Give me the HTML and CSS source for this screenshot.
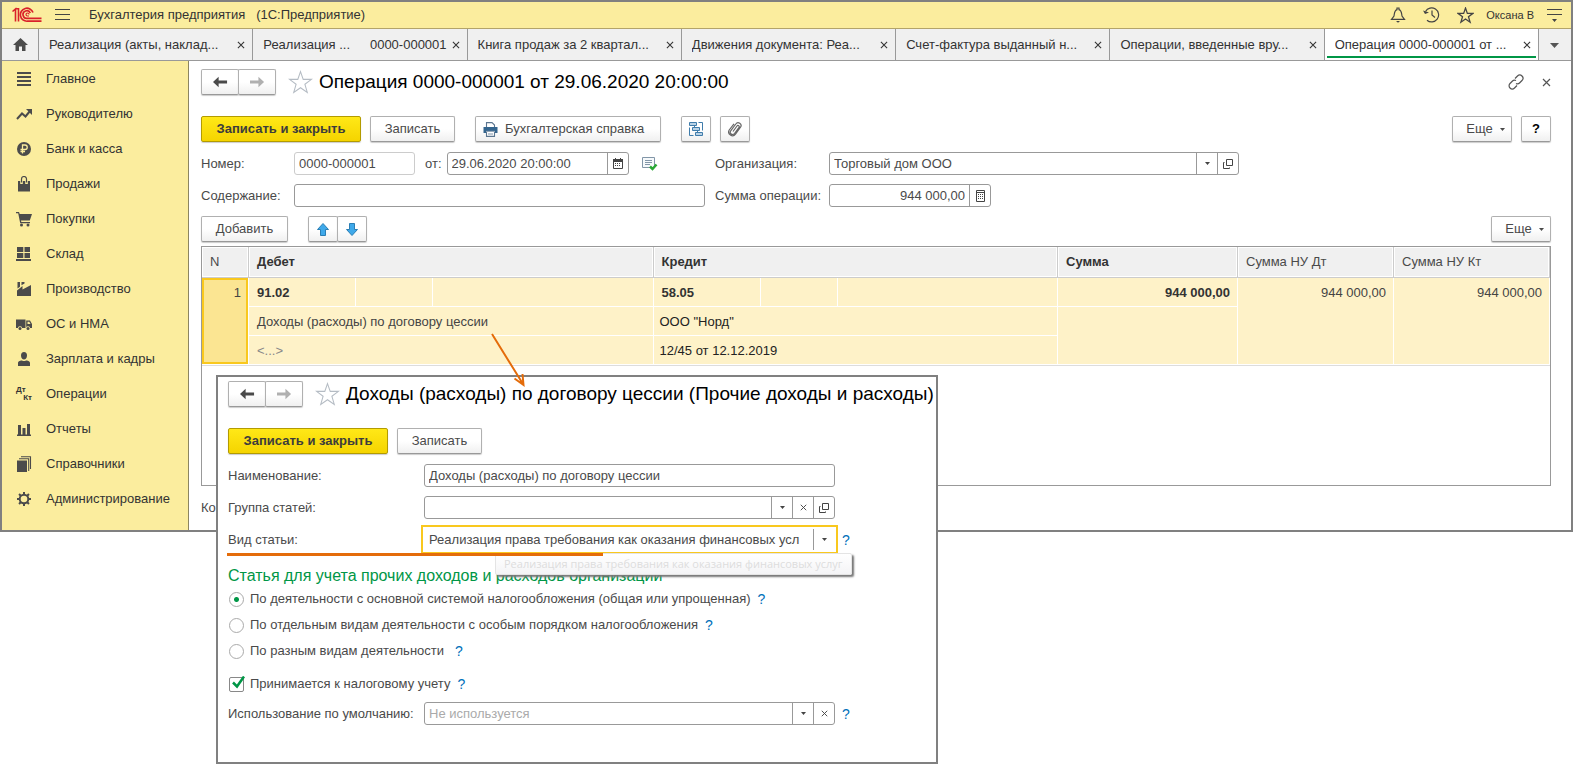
FILE: index.html
```html
<!DOCTYPE html>
<html lang="ru">
<head>
<meta charset="utf-8">
<title>Бухгалтерия предприятия</title>
<link rel="stylesheet" href="styles.css">
</head>
<body>
<svg class="sprite" aria-hidden="true">
  <symbol id="back" viewBox="0 0 16 12"><path d="M0 6 6 0.500V4.500H15V7.500H6V11.500Z" fill="currentColor"/></symbol>
  <symbol id="forward" viewBox="0 0 16 12"><path d="M15 6 9 0.500V4.500H0V7.500H9V11.500Z" fill="currentColor"/></symbol>
  <symbol id="star" viewBox="0 0 24 24"><path d="M12 1.500 14.600 9H22.500L16.200 13.700 18.500 21.500 12 17 5.500 21.500 7.800 13.700 1.500 9H9.400Z" fill="none" stroke="currentColor" stroke-linejoin="miter"/></symbol>
  <symbol id="cross" viewBox="0 0 9 9"><path d="M1 1 8 8M8 1 1 8" fill="none" stroke="currentColor" stroke-width="1.200"/></symbol>
  <symbol id="caret" viewBox="0 0 5 3"><path d="M0 0H5L2.500 3Z" fill="currentColor"/></symbol>
  <symbol id="open" viewBox="0 0 10 10"><path d="M3.500 0.500H9.500V6.500H3.500ZM1.500 3.500H0.500V9.500H6.500V8.500" fill="none" stroke="currentColor"/></symbol>
</svg>

<div class="window">
  <header class="titlebar">
    <svg class="logo" width="30" height="16" viewBox="0 0 30 16" fill="none" stroke="#d9202a"><path d="M0.500 4.500 3.500 2V4M3.500 4V14.500M6.500 1V14.500M4 1.800H7" stroke-width="1.600"/><path d="M21 5.500A6.500 6.500 0 1 0 15.500 14.200H29.500M18.300 6A3.800 3.800 0 1 0 15.500 11.300H29.500" stroke-width="1.700"/><path d="M17 7.500A1.500 1.500 0 1 0 15.500 9H17" stroke-width="1.200"/></svg>
    <button class="plain burger" aria-label="Меню"><svg width="15" height="12" viewBox="0 0 15 12" fill="#444"><path d="M0 0H15V1H0ZM0 5H15V6H0ZM0 10H15V11H0Z"/></svg></button>
    <span class="app-name">Бухгалтерия предприятия &nbsp;&nbsp;(1С:Предприятие)</span>
    <div class="top-actions">
      <button class="plain" aria-label="Уведомления"><svg width="16" height="16" viewBox="0 0 16 16" fill="none" stroke="#444" stroke-width="1.200"><path d="M1.500 12.300H14.500L12 9C11.500 6 11.500 3.200 9 2.700V1H7V2.700C4.500 3.200 4.500 6 4 9Z"/><path d="M6 14H10L8 15.700Z" fill="#444" stroke="none"/></svg></button>
      <button class="plain" aria-label="История"><svg width="17" height="16" viewBox="0 0 17 16" fill="none" stroke="#444" stroke-width="1.200"><path d="M2.500 4.500A7 7 0 1 1 4 13.200M9 3.500V8L12 10.500"/><path d="M0 3.500 6 5.500 2 7Z" fill="#444" stroke="none"/></svg></button>
      <button class="plain" aria-label="Избранное"><svg width="17" height="17" viewBox="0 0 24 24" color="#444" stroke-width="1.800"><use href="#star"/></svg></button>
      <span class="user">Оксана В</span>
      <button class="plain" aria-label="Настройки"><svg width="15" height="13" viewBox="0 0 15 13" fill="#444"><path d="M0 0H15V1H0ZM0 5H15V6H0ZM5 10H10L7.500 13Z"/></svg></button>
    </div>
  </header>

  <nav class="tabs">
    <button class="home" aria-label="Начальная страница"><svg width="15" height="13" viewBox="0 0 15 13"><path d="M7.500 0 15 7H12.500V13H9V8.500H6V13H2.500V7H0Z" fill="#4b4b4b"/></svg></button>
    <div class="tab"><span class="tab-text">Реализация (акты, наклад...</span><button class="plain close" aria-label="Закрыть"><svg width="8" height="8"><use href="#cross"/></svg></button></div>
    <div class="tab"><span class="tab-text">Реализация ...</span><span class="tab-number">0000-000001</span><button class="plain close" aria-label="Закрыть"><svg width="8" height="8"><use href="#cross"/></svg></button></div>
    <div class="tab"><span class="tab-text">Книга продаж за 2 квартал...</span><button class="plain close" aria-label="Закрыть"><svg width="8" height="8"><use href="#cross"/></svg></button></div>
    <div class="tab"><span class="tab-text">Движения документа: Реа...</span><button class="plain close" aria-label="Закрыть"><svg width="8" height="8"><use href="#cross"/></svg></button></div>
    <div class="tab"><span class="tab-text">Счет-фактура выданный н...</span><button class="plain close" aria-label="Закрыть"><svg width="8" height="8"><use href="#cross"/></svg></button></div>
    <div class="tab"><span class="tab-text">Операции, введенные вру...</span><button class="plain close" aria-label="Закрыть"><svg width="8" height="8"><use href="#cross"/></svg></button></div>
    <div class="tab active"><span class="tab-text">Операция 0000-000001 от ...</span><button class="plain close" aria-label="Закрыть"><svg width="8" height="8"><use href="#cross"/></svg></button></div>
    <button class="more-tabs" aria-label="Все вкладки"><svg width="9" height="5" viewBox="0 0 9 5"><path d="M0 0H9L4.500 5Z" fill="#555"/></svg></button>
  </nav>

  <div class="work">
    <aside class="sidebar">
      <a href="#"><svg viewBox="0 0 16 16"><path d="M1 1H15V3H1ZM1 5H15V7H1ZM1 9H15V11H1ZM1 13H15V15H1Z"/></svg>Главное</a>
      <a href="#"><svg viewBox="0 0 16 16"><path d="M1 13 6 7.500 9.500 10.500 14 5" fill="none" stroke="#4b4b4b" stroke-width="2"/><path d="M10 3H16V9Z"/></svg>Руководителю</a>
      <a href="#"><svg viewBox="0 0 16 16"><circle cx="8" cy="8" r="7"/><path d="M6.500 12.500V4H9A2.200 2.200 0 0 1 9 8.500H4.500M4.500 10.500H9" fill="none" stroke="#fbed9e" stroke-width="1.300"/></svg>Банк и касса</a>
      <a href="#"><svg viewBox="0 0 16 16"><path d="M2 5H14V15.500H2Z"/><path d="M5.500 8V3A2.500 2.500 0 0 1 10.500 3V8" fill="none" stroke="#fbed9e" stroke-width="2.600"/><path d="M5.500 6.500V3A2.500 2.500 0 0 1 10.500 3V6.500" fill="none" stroke="#4b4b4b" stroke-width="1.200"/></svg>Продажи</a>
      <a href="#"><svg viewBox="0 0 16 16"><path d="M0 1H3L3.700 3H16L13.800 9.500H5L5.300 11H14V12.200H4.200L2.200 2.300H0Z"/><circle cx="5.500" cy="14" r="1.500"/><circle cx="12" cy="14" r="1.500"/></svg>Покупки</a>
      <a href="#"><svg viewBox="0 0 16 16"><path d="M1 1H7.300V6H1ZM8.500 1H14V6H8.500ZM1 7H7.300V12H1ZM8.500 7H14V12H8.500ZM0 13H15V15H0Z"/></svg>Склад</a>
      <a href="#"><svg viewBox="0 0 16 16"><path d="M1 15V9.500L6.500 5V8.500L15 4V15ZM1.500 7.500V1H4V5.700ZM5.500 4.300V1H8.500V2.500Z"/></svg>Производство</a>
      <a href="#"><svg viewBox="0 0 16 16"><path d="M0 3.500H9.500V12H0ZM10.200 4.500H14L16 8V12H10.200Z"/><path d="M11.500 5.800H13.300L14.500 8H11.500Z" fill="#fbed9e"/><circle cx="4" cy="12.500" r="2.200" fill="#fbed9e"/><circle cx="12" cy="12.500" r="2.200" fill="#fbed9e"/><circle cx="4" cy="12.500" r="1.500"/><circle cx="12" cy="12.500" r="1.500"/></svg>ОС и НМА</a>
      <a href="#"><svg viewBox="0 0 16 16"><path d="M8 1C10 1 11 2.500 11 4.500C11 7 9.500 8.500 8 8.500C6.500 8.500 5 7 5 4.500C5 2.500 6 1 8 1ZM2 15V12C2 10 5 9.500 6 9.500Q8 10.500 10 9.500C11 9.500 14 10 14 12V15Z"/></svg>Зарплата и кадры</a>
      <a href="#"><span class="dtkt"><b>Дт</b><b>Кт</b></span>Операции</a>
      <a href="#"><svg viewBox="0 0 16 16"><path d="M1 13.500H15V15H1ZM2 4H5V14H2ZM6.500 7H9.500V14H6.500ZM11 3H14V14H11Z"/></svg>Отчеты</a>
      <a href="#"><svg viewBox="0 0 16 16"><path d="M1 4.500H11V16H1Z"/><path d="M3 2.700H12.700V15M5 0.700H14.500V13" fill="none" stroke="#4b4b4b" stroke-width="1.100"/></svg>Справочники</a>
      <a href="#"><svg viewBox="0 0 16 16"><circle cx="8" cy="8" r="4.300" fill="none" stroke="#4b4b4b" stroke-width="2"/><path d="M8 1V4M8 12V15M1 8H4M12 8H15M3.050 3.050 5.200 5.200M10.800 10.800 12.950 12.950M3.050 12.950 5.200 10.800M10.800 5.200 12.950 3.050" stroke="#4b4b4b" stroke-width="2"/></svg>Администрирование</a>
    </aside>

    <main class="content">
      <div class="heading">
        <div class="nav-pair"><button class="btn" aria-label="Назад"><svg width="15" height="12"><use href="#back"/></svg></button><button class="btn off" aria-label="Вперед"><svg width="15" height="12"><use href="#forward"/></svg></button></div>
        <svg class="fav" width="25" height="25"><use href="#star"/></svg>
        <h1>Операция 0000-000001 от 29.06.2020 20:00:00</h1>
        <div class="push head-tools">
          <button class="plain" aria-label="Ссылка"><svg width="16" height="16" viewBox="0 0 16 16" fill="none" stroke="#555" stroke-width="1.200"><path d="M7 4.500 9.500 2A2.900 2.900 0 0 1 14 6.500L11.500 9A2.900 2.900 0 0 1 8 9.500M9 11.500 6.500 14A2.900 2.900 0 0 1 2 9.500L4.500 7A2.900 2.900 0 0 1 8 6.500"/></svg></button>
          <button class="plain" aria-label="Закрыть"><svg width="9" height="9" color="#555"><use href="#cross"/></svg></button>
        </div>
      </div>

      <div class="toolbar">
        <button class="btn primary">Записать и закрыть</button>
        <button class="btn save">Записать</button>
        <button class="btn print"><svg width="15" height="15" viewBox="0 0 15 15"><path d="M3.500 5V0.600H9L11.500 3V5M3.500 10V14.400H11.500V10" fill="#fff" stroke="#5c7690" stroke-width="1.100"/><path d="M0.500 5H14.500V11H12V9H3V11H0.500Z" fill="#34658e"/><path d="M3 9.300H12M5 12H10" stroke="#7d93a8"/></svg>Бухгалтерская справка</button>
        <button class="btn square linked" aria-label="Структура подчиненности"><svg width="16" height="16" viewBox="0 0 16 16" fill="#b9d2e6" stroke="#3f7cab"><path d="M1.500 1.500H8.500V4.500H1.500ZM4.500 6.500H11.500V9.500H4.500ZM7.500 11.500H14.500V14.500H7.500Z"/><path d="M10.500 1.500H14.500V9.500M1.500 6.500V14.500H5.500M6.500 5V6M9.500 10V11" fill="none"/></svg></button>
        <button class="btn square" aria-label="Файлы"><svg width="14" height="16" viewBox="0 0 14 16" fill="none" stroke="#666" stroke-width="1.200"><path d="M5 10.500 9 5A1.200 1.200 0 0 1 11 6.400L6.500 12.500A2.300 2.300 0 0 1 2.700 9.800L7.800 3A2.800 2.800 0 0 1 12.500 6.200L7.500 13.200A3.800 3.800 0 0 1 1.200 9L6 2.800"/></svg></button>
        <button class="btn more push">Еще <svg width="5" height="3"><use href="#caret"/></svg></button>
        <button class="btn help">?</button>
      </div>

      <div class="form">
        <label for="number">Номер:</label>
        <div class="group">
          <input class="box locked" id="number" value="0000-000001" readonly>
          <label class="from" for="date">от:</label>
          <div class="box combo date"><input id="date" value="29.06.2020 20:00:00"><button class="cell" aria-label="Календарь"><svg width="10" height="11" viewBox="0 0 10 11"><path d="M0.500 1.500H9.500V10.500H0.500Z" fill="none" stroke="#444"/><path d="M0 1H10V4H0ZM2 0H3V2H2ZM7 0H8V2H7ZM2 5H3V6H2ZM4 5H5V6H4ZM6 5H7V6H6ZM2 7H3V8H2ZM4 7H5V8H4ZM6 7H7V8H6Z" fill="#444"/></svg></button></div>
          <svg class="posted" width="16" height="14" viewBox="0 0 16 14"><path d="M0.500 0.500H12.500V10.500H0.500Z" fill="#f6f9fb" stroke="#8296a8"/><path d="M3 3.500H10M3 5.500H10M3 7.500H8" stroke="#8296a8"/><path d="M8 9.500 10.500 12 14.500 7.500" fill="none" stroke="#2aa836" stroke-width="2.500"/></svg>
        </div>
        <label for="org">Организация:</label>
        <div class="box combo"><select id="org"><option>Торговый дом ООО</option></select><span class="cell"><svg width="5" height="3"><use href="#caret"/></svg></span><button class="cell" aria-label="Открыть"><svg width="10" height="10"><use href="#open"/></svg></button></div>

        <label for="about">Содержание:</label>
        <input class="box" id="about">
        <label for="sum">Сумма операции:</label>
        <div class="box combo sum"><input id="sum" value="944 000,00"><button class="cell" aria-label="Калькулятор"><svg width="9" height="12" viewBox="0 0 9 12"><path d="M0.500 0.500H8.500V11.500H0.500ZM0.500 2.500H8.500" fill="none" stroke="#444"/><path d="M2 4H3V5H2ZM4 4H5V5H4ZM6 4H7V5H6ZM2 6H3V7H2ZM4 6H5V7H4ZM6 6H7V7H6ZM2 8H3V9H2ZM4 8H5V9H4ZM6 8H7V9H6Z" fill="#444"/></svg></button></div>
      </div>

      <div class="toolbar rows-bar">
        <button class="btn add">Добавить</button>
        <div class="move-pair"><button class="btn" aria-label="Вверх"><svg width="12" height="13" viewBox="0 0 12 13"><path d="M6 0.500 11.500 6.500H8.500V12.500H3.500V6.500H0.500Z" fill="#3fa9ea" stroke="#2b7fb5"/></svg></button><button class="btn" aria-label="Вниз"><svg width="12" height="13" viewBox="0 0 12 13"><path d="M6 12.500 11.500 6.500H8.500V0.500H3.500V6.500H0.500Z" fill="#3fa9ea" stroke="#2b7fb5"/></svg></button></div>
        <button class="btn more push">Еще <svg width="5" height="3"><use href="#caret"/></svg></button>
      </div>

      <div class="grid">
        <table>
          <colgroup><col class="c-n"><col class="c-acc"><col class="c-cur"><col><col class="c-acc"><col class="c-cur"><col><col class="c-sum"><col class="c-nu"><col class="c-nu"></colgroup>
          <thead><tr><th class="light">N</th><th colspan="3">Дебет</th><th colspan="3">Кредит</th><th>Сумма</th><th class="light">Сумма НУ Дт</th><th class="light">Сумма НУ Кт</th></tr></thead>
          <tbody>
            <tr><td class="current num" rowspan="3">1</td><td class="strong">91.02</td><td></td><td></td><td class="strong">58.05</td><td></td><td></td><td class="strong num">944 000,00</td><td class="num" rowspan="3">944 000,00</td><td class="num" rowspan="3">944 000,00</td></tr>
            <tr><td colspan="3">Доходы (расходы) по договору цессии</td><td class="note" colspan="3">ООО "Норд"</td><td rowspan="2"></td></tr>
            <tr><td class="faint" colspan="3">&lt;...&gt;</td><td class="note" colspan="3">12/45 от 12.12.2019</td></tr>
          </tbody>
        </table>
      </div>
      <div class="comment">Ко</div>
    </main>
  </div>
</div>

<section class="dialog">
  <div class="heading">
    <div class="nav-pair"><button class="btn" aria-label="Назад"><svg width="15" height="12"><use href="#back"/></svg></button><button class="btn off" aria-label="Вперед"><svg width="15" height="12"><use href="#forward"/></svg></button></div>
    <svg class="fav" width="25" height="25"><use href="#star"/></svg>
    <h2>Доходы (расходы) по договору цессии (Прочие доходы и расходы)</h2>
  </div>
  <div class="toolbar">
    <button class="btn primary">Записать и закрыть</button>
    <button class="btn save">Записать</button>
  </div>
  <div class="fields">
    <label for="name">Наименование:</label>
    <input class="box" id="name" value="Доходы (расходы) по договору цессии"><span></span>
    <label for="group">Группа статей:</label>
    <div class="box combo"><select id="group"><option></option></select><span class="cell"><svg width="5" height="3"><use href="#caret"/></svg></span><button class="cell" aria-label="Очистить"><svg width="7" height="7" viewBox="0 0 9 9"><use href="#cross"/></svg></button><button class="cell" aria-label="Открыть"><svg width="10" height="10"><use href="#open"/></svg></button></div><span></span>
    <label for="kind">Вид статьи:</label>
    <div class="box combo focused"><select id="kind"><option>Реализация права требования как оказания финансовых усл</option></select><span class="cell"><svg width="5" height="3"><use href="#caret"/></svg></span></div><a class="hint" href="#">?</a>
  </div>
  <h3>Статья для учета прочих доходов и расходов организации</h3>
  <div class="choice"><input type="radio" name="activity" id="r1" checked><label for="r1">По деятельности с основной системой налогообложения (общая или упрощенная)</label><a class="hint" href="#">?</a></div>
  <div class="choice"><input type="radio" name="activity" id="r2"><label for="r2">По отдельным видам деятельности с особым порядком налогообложения</label><a class="hint" href="#">?</a></div>
  <div class="choice"><input type="radio" name="activity" id="r3"><label for="r3">По разным видам деятельности</label><a class="hint wide" href="#">?</a></div>
  <div class="choice tax"><span class="tick"><input type="checkbox" id="tax" checked><svg width="15" height="15" viewBox="0 0 15 15"><path d="M3 6.500 7 10.500 14 0.500" fill="none" stroke="#009646" stroke-width="2.500"/></svg></span><label for="tax">Принимается к налоговому учету</label><a class="hint" href="#">?</a></div>
  <div class="fields last">
    <label for="usage">Использование по умолчанию:</label>
    <div class="box combo"><select class="empty" id="usage"><option>Не используется</option></select><span class="cell"><svg width="5" height="3"><use href="#caret"/></svg></span><button class="cell" aria-label="Очистить"><svg width="7" height="7" viewBox="0 0 9 9"><use href="#cross"/></svg></button></div><a class="hint" href="#">?</a>
  </div>
  <div class="tooltip">Реализация права требования как оказания финансовых услуг</div>
  <div class="underline"></div>
</section>
<svg class="arrow" width="36" height="58" viewBox="0 0 36 58" fill="none" stroke="#e46c0a" stroke-width="2"><path d="M2 2 33 52M24.500 46.500 33.500 53 32.500 42"/></svg>
</body>
</html>
```
FILE: styles.css
```css
* { box-sizing: border-box; }

body {
  position: relative;
  min-height: 100vh;
  margin: 0;
  background: #fff;
  color: #4a4a4a;
  font: 13px/16px "Liberation Sans", Arial, sans-serif;
}

button, input, select { margin: 0; font: inherit; color: inherit; }
h1, h2, h3 { margin: 0; font-weight: 400; }
a { color: inherit; text-decoration: none; }
svg { display: block; flex: none; }
.sprite { position: absolute; width: 0; height: 0; }

.plain {
  display: flex;
  padding: 0;
  border: 0;
  background: none;
}

.push { margin-left: auto; }

.window { border: 2px solid #808080; }

/* Title bar */
.titlebar {
  display: flex;
  align-items: center;
  height: 27px;
  padding: 0 9px 0 10px;
  background: #fbed9e;
  border-bottom: 1px solid #b3a46a;
  color: #333;
}
.burger { margin: 0 19px 0 13px; }
.app-name { white-space: pre; }
.top-actions {
  display: flex;
  align-items: center;
  gap: 17px;
  margin-left: auto;
}
.user { font-size: 11px; margin: 0 -4px 0 -5px; }

/* Tabs */
.tabs {
  display: flex;
  height: 32px;
  background: #f0f0f0;
  border-bottom: 1px solid #999;
  color: #333;
}
.home, .more-tabs {
  display: flex;
  align-items: center;
  justify-content: center;
  width: 37px;
  padding: 0;
  border: 0;
  border-right: 1px solid #999;
  background: none;
}
.more-tabs { width: 32px; padding-top: 2px; border: 0; }
.tab {
  display: flex;
  flex: 1;
  align-items: center;
  min-width: 0;
  padding: 0 7px 0 10px;
  border-right: 1px solid #999;
  white-space: nowrap;
}
.tab-text { flex: 1; overflow: hidden; }
.tab-number { margin-right: 5px; }
.tab.active {
  background: linear-gradient(#009646, #009646) 2px 27px / calc(100% - 4px) 2px no-repeat #fff;
}

/* Sections panel */
.work { display: flex; }
.sidebar {
  flex: none;
  width: 187px;
  background: #fbed9e;
  border-right: 1px solid #8c8560;
}
.sidebar a {
  display: flex;
  align-items: center;
  gap: 14px;
  height: 35px;
  padding-left: 14px;
  color: #333;
}
.sidebar svg { width: 16px; height: 16px; fill: #4b4b4b; }
.dtkt { width: 16px; font-size: 8px; line-height: 8px; }
.dtkt b { display: block; }
.dtkt b + b { text-align: right; }

.content {
  flex: 1;
  min-width: 0;
  padding: 8px 20px 11px 12px;
}

.heading {
  display: flex;
  align-items: center;
  height: 26px;
  margin-bottom: 21px;
}
.heading h1, .heading h2 { font-size: 19px; line-height: 26px; color: #000; white-space: nowrap; }
.fav { margin: 0 6px 0 12px; color: #b5bcc4; }
.head-tools { display: flex; align-items: center; gap: 18px; }

/* Buttons */
.btn {
  display: flex;
  align-items: center;
  justify-content: center;
  height: 26px;
  padding: 0;
  border: 1px solid #b0b0b0;
  border-bottom-color: #999;
  border-radius: 2px;
  background: linear-gradient(#fff 50%, #f0f0f0);
  box-shadow: 0 1px 1px #ccc;
  white-space: nowrap;
}
.nav-pair, .move-pair { display: flex; }
.nav-pair .btn { width: 38px; }
.move-pair .btn { width: 30px; }
.nav-pair .btn + .btn, .move-pair .btn + .btn { margin-left: -1px; }
.nav-pair .off { color: #b0b0b0; }

.toolbar { display: flex; gap: 9px; margin-bottom: 10px; }
.primary {
  width: 160px;
  border-color: #b39b00;
  background: linear-gradient(#ffe817, #f5d400);
  color: #3c3c3c;
  font-weight: 700;
}
.save { width: 85px; }
.print { justify-content: flex-start; gap: 7px; width: 186px; margin-left: 11px; padding-left: 7px; }
.square { width: 30px; }
.linked { margin-left: 11px; }
.more { gap: 7px; width: 60px; padding-left: 7px; }
.help { width: 30px; color: #000; font-weight: 700; }
.add { width: 87px; }
.move-pair { margin-left: 11px; }
.rows-bar { margin: 9px 0 4px; }

/* Fields */
.box {
  width: 100%;
  min-width: 0;
  height: 23px;
  padding: 0 4px;
  border: 1px solid #999;
  border-radius: 3px;
  background: #fff;
}
.combo { display: flex; padding: 0; }
.combo input, .combo select {
  flex: 1;
  width: 0;
  min-width: 0;
  padding: 0 4px;
  border: 0;
  outline: 0;
  background: none;
  appearance: none;
}
.cell {
  display: flex;
  flex: none;
  align-items: center;
  justify-content: center;
  width: 21px;
  padding: 0;
  border: 0;
  border-left: 1px solid #999;
  background: none;
  color: #444;
}
.form {
  display: grid;
  grid-template-columns: 93px 411px 124px 410px;
  row-gap: 9px;
  align-items: center;
  white-space: nowrap;
}
.form > label:nth-of-type(even) { padding-left: 10px; }
.group { display: flex; align-items: center; }
.locked { width: 121px; border-color: #ccc; }
.from { padding: 0 5px 0 10px; }
.date { width: 182px; }
.posted { margin-left: 13px; }
.sum { width: 162px; }
.sum input { text-align: right; }

/* Entries table */
.grid { height: 240px; border: 1px solid #999; }
table { width: 100%; border-spacing: 0; table-layout: fixed; border-bottom: 1px solid #ddd; }
.c-n { width: 47px; }
.c-acc { width: 107px; }
.c-cur { width: 77px; }
.c-sum { width: 180px; }
.c-nu { width: 156px; }
th {
  height: 31px;
  padding: 0 8px;
  border: solid #ccc;
  border-width: 0 1px 1px 0;
  background: #f0f0f0;
  box-shadow: inset 0 0 0 1px #fff;
  color: #333;
  text-align: left;
}
th.light { color: #4a4a4a; font-weight: 400; }
td {
  height: 29px;
  padding: 7px 7px 5px 8px;
  border: solid #fff;
  border-width: 0 1px 1px 0;
  background: #fef2c8;
  color: #444;
  line-height: 16px;
  vertical-align: top;
}
.num { text-align: right; }
.strong { color: #333; font-weight: 700; }
.faint { color: #888; }
.note { padding-left: 6px; color: #222; }
td.current { background: #fbe592; box-shadow: inset 0 0 0 2px #f9c81e; }
.comment { margin-top: 10px; line-height: 23px; }

/* Item form over the main window */
.dialog {
  position: absolute;
  left: 216px;
  top: 375px;
  width: 722px;
  padding: 4px 10px 37px;
  border: 2px solid #808080;
  background: #fff;
}
.fields {
  display: grid;
  grid-template-columns: 196px 411px 1fr;
  row-gap: 9px;
  align-items: center;
}
.fields label { white-space: nowrap; }
.focused { border-color: transparent; border-radius: 0; outline: 2px solid #f9c81e; outline-offset: 1px; }
.focused select { padding-right: 0; }
.empty { color: #aaa; }
.hint { margin-left: 7px; color: #0070ba; font-size: 14px; }
.hint.wide { margin-left: 11px; }
.dialog h3 { margin-top: 15px; color: #009646; font-size: 16px; line-height: 20px; }
.choice { display: flex; align-items: center; height: 26px; }
.choice input {
  width: 15px;
  height: 15px;
  margin: 0 6px 0 1px;
  border: 1px solid #aaa;
  background: #fff;
  appearance: none;
}
.choice input[type="radio"] { border-radius: 50%; }
.choice input[type="radio"]:checked { background: radial-gradient(circle, #009646 2px, #fff 3px); }
.choice input[type="checkbox"] { border-color: #888; border-radius: 2px; }
.tick { position: relative; display: flex; }
.tick svg { position: absolute; left: 2px; top: -1px; }
.tax { margin: 7px 0 5px; }

.tooltip {
  position: absolute;
  left: 277px;
  top: 176px;
  padding: 2px 8px;
  border: 1px solid #e4e4e4;
  border-radius: 2px;
  background: linear-gradient(#fff, #f4f4f6);
  box-shadow: 2px 2px 2px #777;
  color: #ddd;
  font: 11px/16px "Open Sans", sans-serif;
  white-space: nowrap;
}
.underline {
  position: absolute;
  left: 9px;
  top: 176px;
  width: 376px;
  height: 3px;
  background: #e46c0a;
}
.arrow { position: absolute; left: 490px; top: 332px; }
```
